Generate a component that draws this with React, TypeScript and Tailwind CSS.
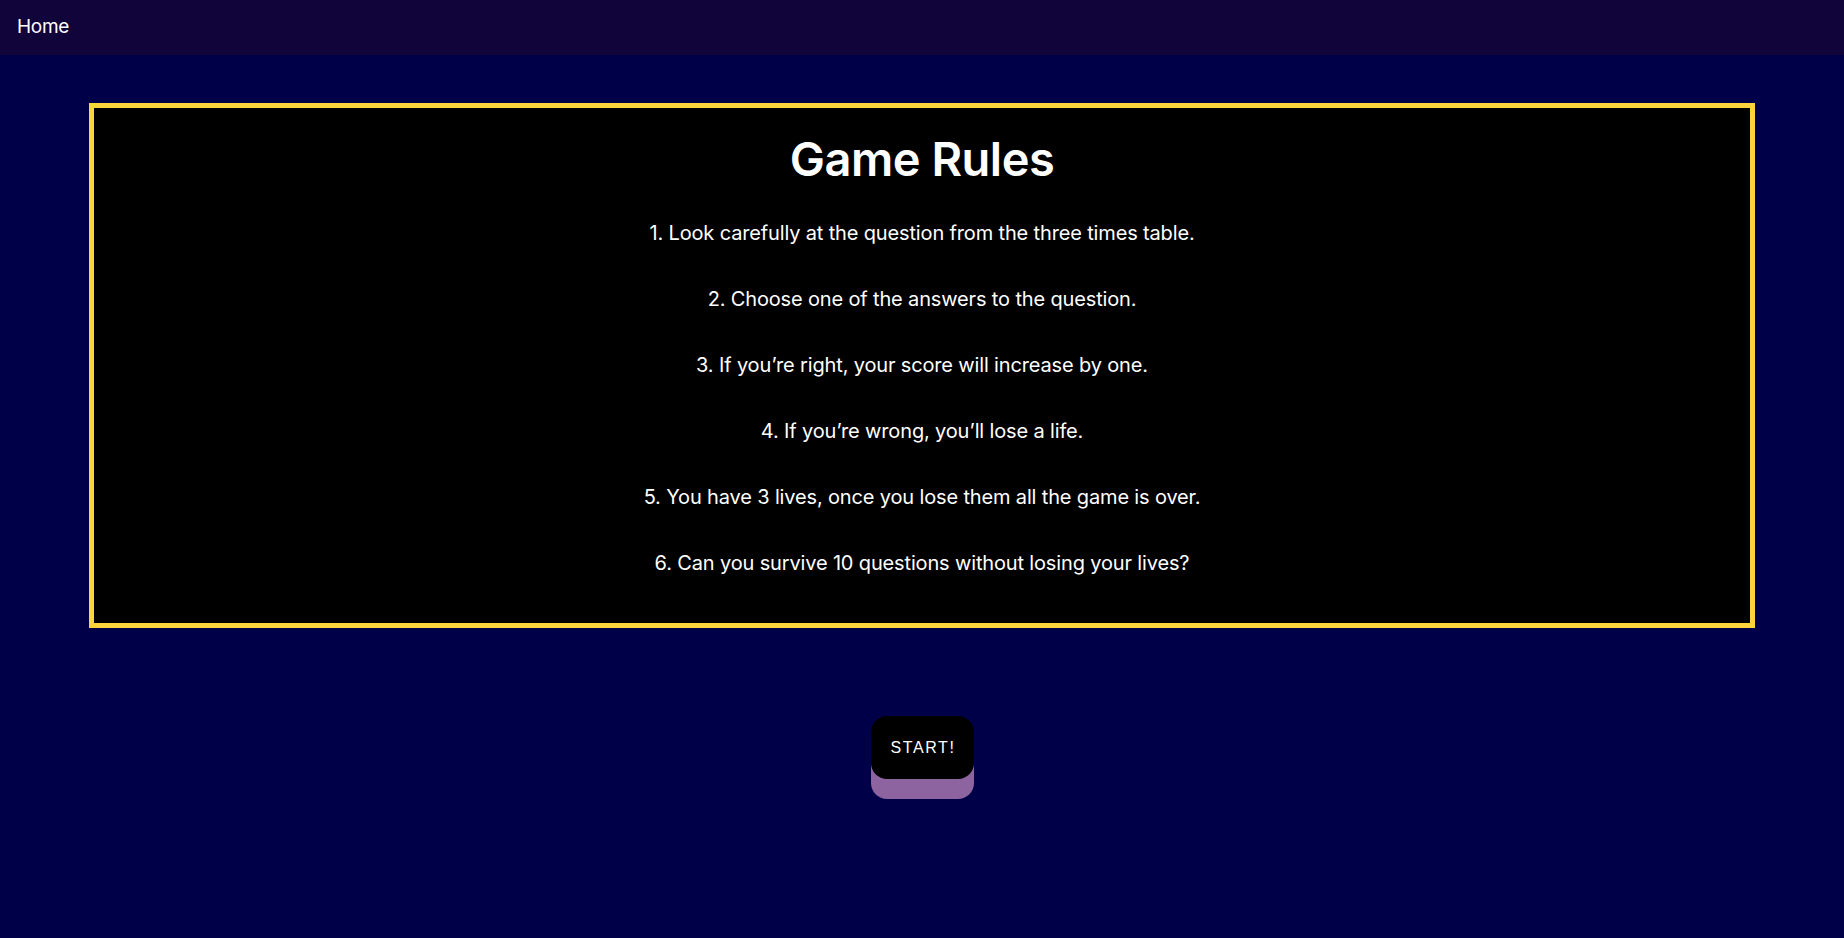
import React from 'react';

const rules = [
  '1. Look carefully at the question from the three times table.',
  '2. Choose one of the answers to the question.',
  '3. If you\u2019re right, your score will increase by one.',
  '4. If you\u2019re wrong, you\u2019ll lose a life.',
  '5. You have 3 lives, once you lose them all the game is over.',
  '6. Can you survive 10 questions without losing your lives?',
];

export default function App() {
  return (
    <div className="min-h-screen bg-[#000048] font-['Inter',sans-serif] text-white">
      {/* Top nav */}
      <nav className="h-[55px] bg-[#10043a] flex items-center px-[17px]">
        <a href="#" className="text-[19px] tracking-[-0.3px]">Home</a>
      </nav>

      {/* Rules box */}
      <section className="w-[1666px] h-[525px] mx-auto mt-[48px] bg-black border-[5px] border-[#fdd43b] flex flex-col items-center pt-[22px]">
        <h1 className="text-[47px] leading-[58px] font-semibold tracking-[-0.5px]">Game Rules</h1>
        <div className="mt-[12px] flex flex-col items-center">
          {rules.map((rule) => (
            <p key={rule} className="h-[66px] flex items-center text-[20px] tracking-[-0.15px]">
              {rule}
            </p>
          ))}
        </div>
      </section>

      {/* Start button */}
      <div className="flex justify-center mt-[88px]">
        <button className="w-[103px] h-[63px] rounded-[16px] bg-black shadow-[0_20px_0_#8e64a0] font-['Liberation_Sans',sans-serif] text-[16px] tracking-[1.6px] pl-[2px] text-white">
          START!
        </button>
      </div>
    </div>
  );
}
